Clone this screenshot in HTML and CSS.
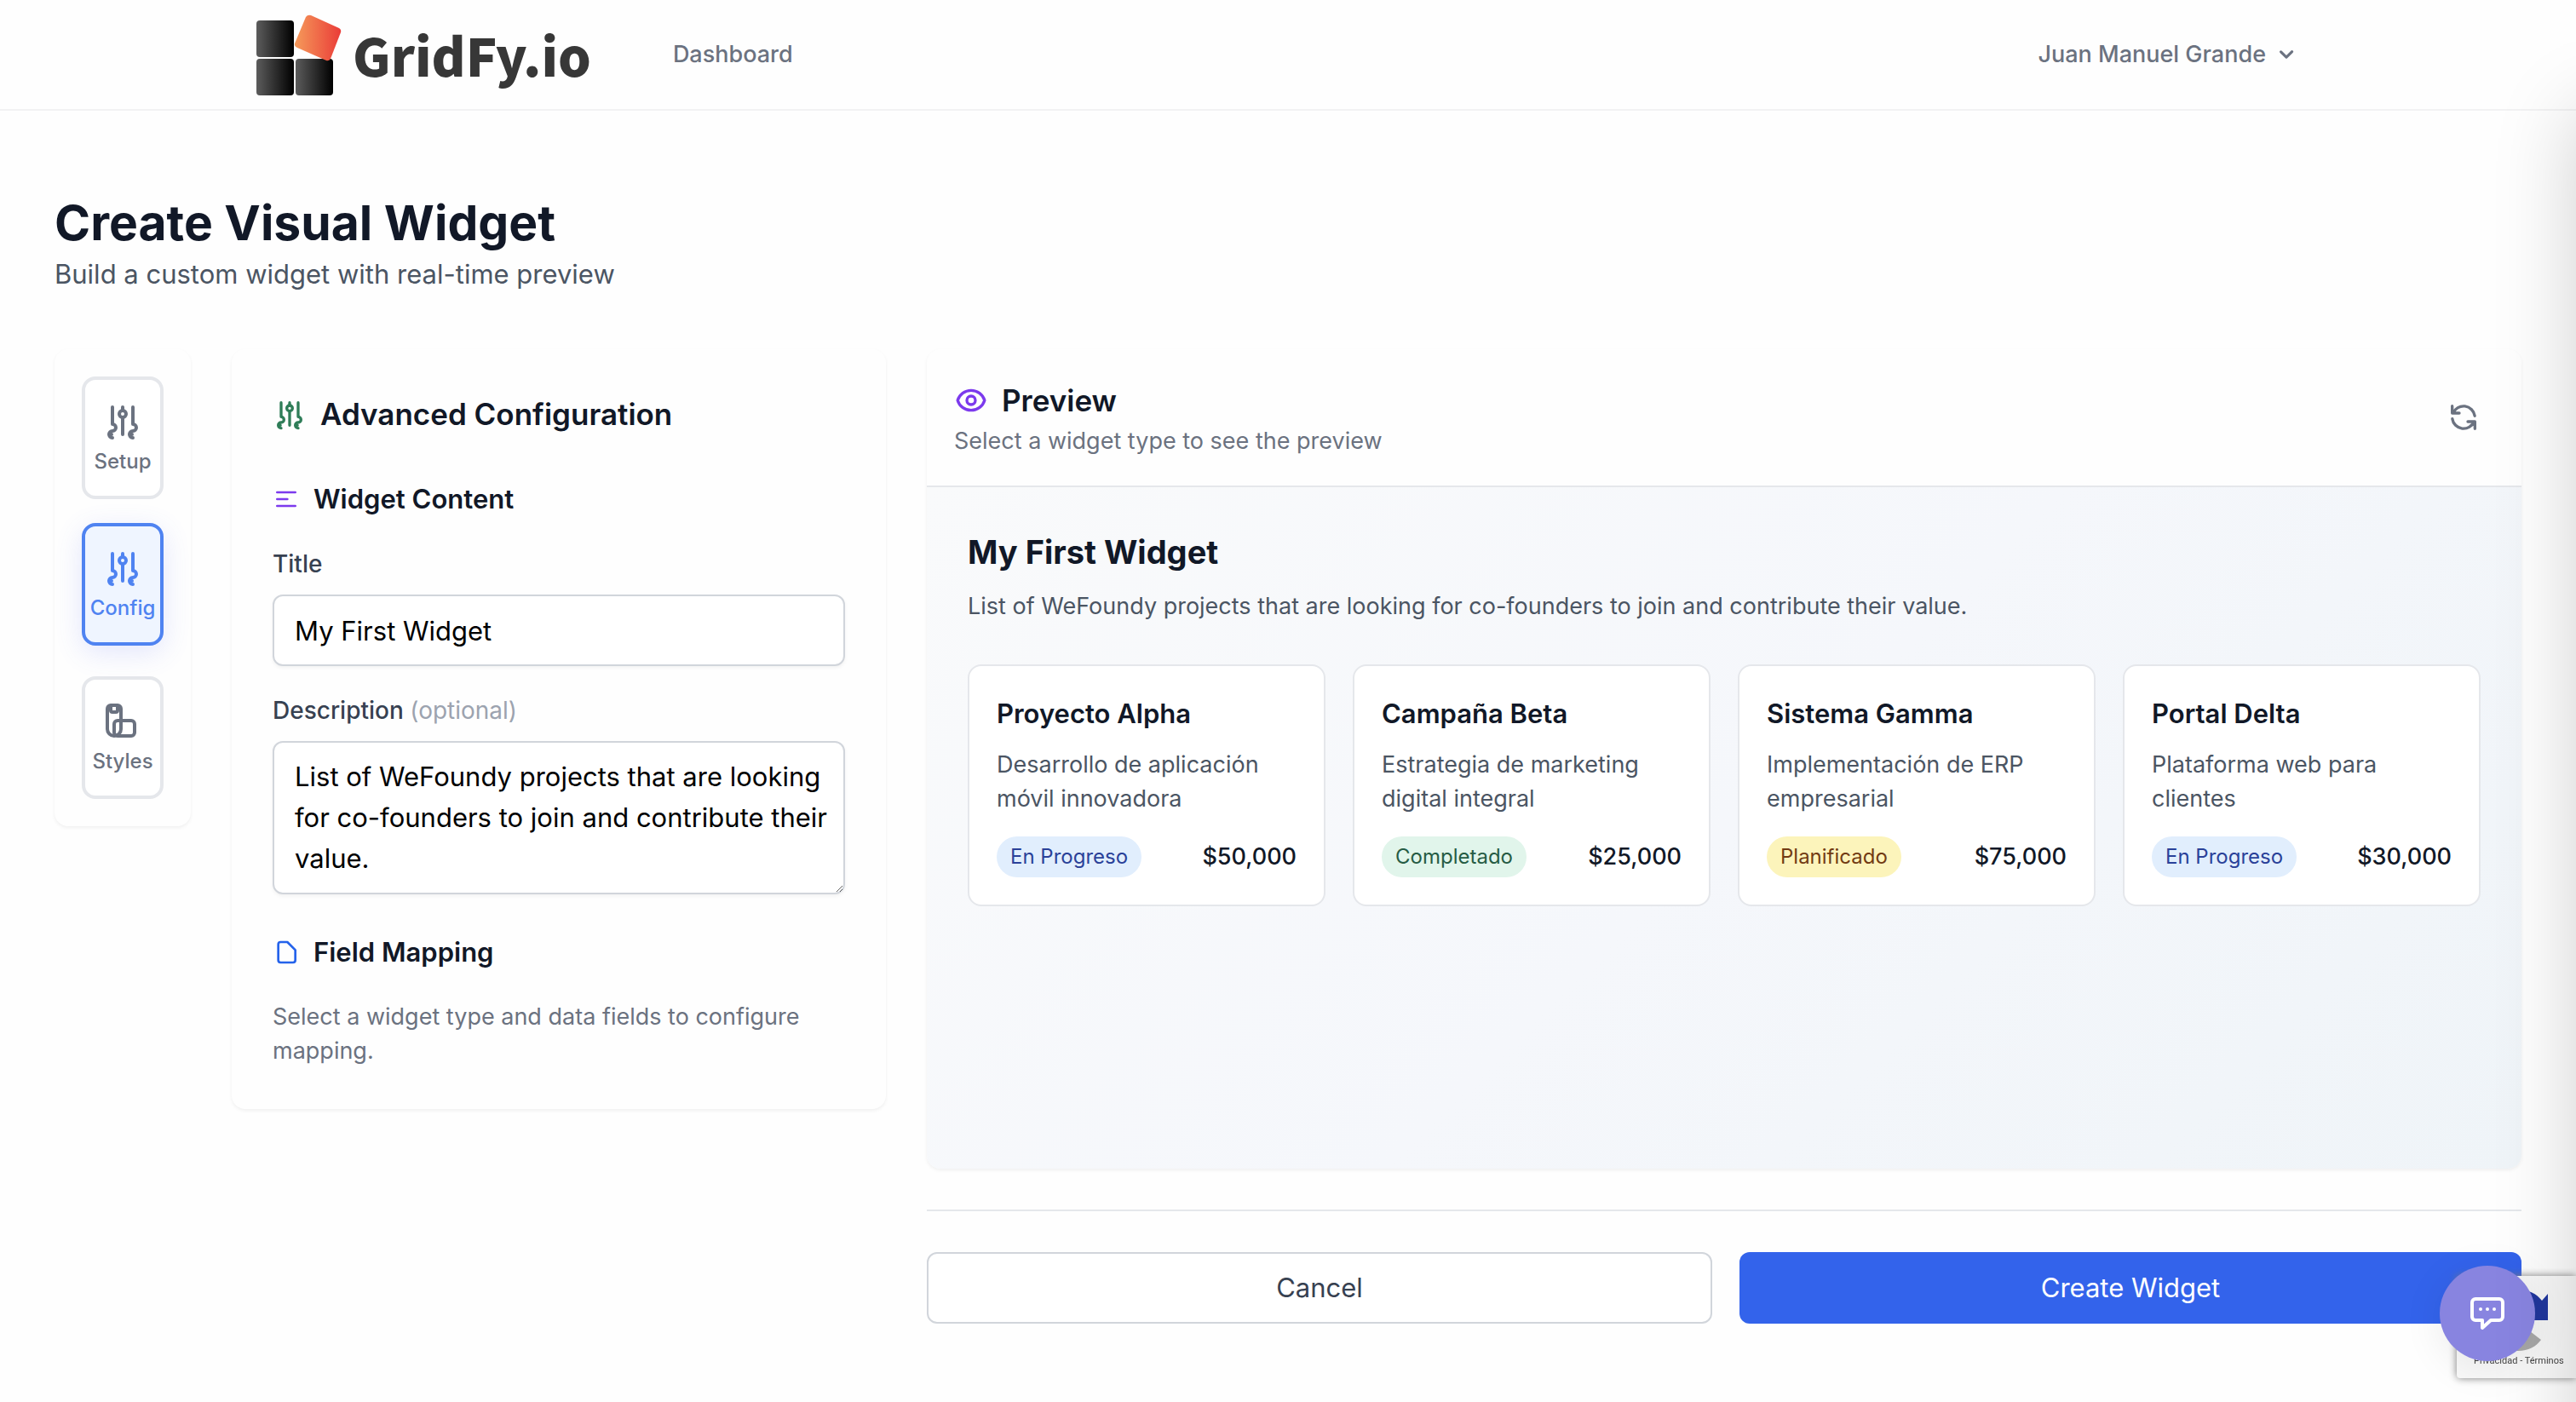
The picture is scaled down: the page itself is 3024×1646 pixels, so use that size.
FILE: index.html
```html
<!DOCTYPE html>
<html lang="en">
<head>
    <meta charset="UTF-8">
    <meta name="viewport" content="width=device-width, initial-scale=1.0">
    <title>GridFy.io - Create Visual Widget</title>
    <link rel="stylesheet" href="styles.css">
</head>
<body>
    <!-- shared icons -->
    <svg class="sprite" aria-hidden="true">
        <symbol id="icon-sliders" viewBox="0 0 24 24">
            <path d="M6 4v10a2 2 0 0 1 0 4a2 2 0 0 0 0 4M5 20h.5M12 4v2M12 10v10M18 4v10a2 2 0 0 1 0 4a2 2 0 0 0 0 4M17 20h.5"/>
            <circle cx="12" cy="8" r="2"/>
        </symbol>
    </svg>

    <header class="header">
        <div class="header-inner">
            <a href="#" class="logo" aria-label="GridFy.io">
                <svg class="logo-mark" viewBox="0 0 102 100" aria-hidden="true">
                    <defs>
                        <linearGradient id="dark"><stop offset="0" stop-color="#5c5c5c"/><stop offset="1" stop-color="#000"/></linearGradient>
                        <linearGradient id="orange"><stop offset="0" stop-color="#f59a5a"/><stop offset="1" stop-color="#ea3c38"/></linearGradient>
                    </defs>
                    <rect x="1" y="10" width="44" height="43" rx="4" fill="url(#dark)"/>
                    <rect x="1" y="55" width="44" height="43" rx="4" fill="url(#dark)"/>
                    <rect x="47" y="55" width="44" height="43" rx="4" fill="url(#dark)"/>
                    <path d="M65 4l33 15q3 2 2 5l-12 31q-2 3-5 2l-34-15q-4-2-3-5l13-31q2-3 6-2z" fill="url(#orange)"/>
                </svg>
                <span class="logo-text">GridFy.io</span>
            </a>
            <nav class="nav"><a href="#">Dashboard</a></nav>
            <button type="button" class="user-menu">Juan Manuel Grande
                <svg viewBox="0 0 20 20" fill="currentColor" aria-hidden="true"><path d="M5.3 7.3a1 1 0 0 1 1.4 0L10 10.6l3.3-3.3a1 1 0 1 1 1.4 1.4l-4 4a1 1 0 0 1-1.4 0l-4-4a1 1 0 0 1 0-1.4z"/></svg>
            </button>
        </div>
    </header>

    <main class="main">
        <h1>Create Visual Widget</h1>
        <p class="lead">Build a custom widget with real-time preview</p>

        <div class="builder">
            <nav class="panel steps">
                <button type="button" class="step"><svg class="icon"><use href="#icon-sliders"/></svg>Setup</button>
                <button type="button" class="step active"><svg class="icon"><use href="#icon-sliders"/></svg>Config</button>
                <button type="button" class="step">
                    <svg class="icon" viewBox="0 0 24 24"><path d="M5 3h4a2 2 0 0 1 2 2v12a4 4 0 0 1-8 0V5a2 2 0 0 1 2-2z"/><rect x="5" y="3" width="4" height="4" rx="1"/><rect x="7" y="12" width="12" height="9" rx="2"/></svg>Styles
                </button>
            </nav>

            <section class="panel config">
                <h2><svg class="icon green"><use href="#icon-sliders"/></svg>Advanced Configuration</h2>
                <h3><svg class="icon purple" viewBox="0 0 24 24"><path d="M4 6h16M4 12h9M4 18h16"/></svg>Widget Content</h3>
                <div class="field">
                    <label for="title">Title</label>
                    <input type="text" id="title" value="My First Widget">
                </div>
                <div class="field">
                    <label for="description">Description <span>(optional)</span></label>
                    <textarea id="description" rows="3">List of WeFoundy projects that are looking for co-founders to join and contribute their value.</textarea>
                </div>
                <h3 class="mapping"><svg class="icon blue" viewBox="0 0 24 24"><path d="M7 3h6l7 7v9a2 2 0 0 1-2 2H7a2 2 0 0 1-2-2V5a2 2 0 0 1 2-2z"/></svg>Field Mapping</h3>
                <p class="hint">Select a widget type and data fields to configure mapping.</p>
            </section>

            <div class="right">
                <section class="panel preview">
                    <div class="preview-header">
                        <div>
                            <h2><svg class="icon purple" viewBox="0 0 24 24"><circle cx="12" cy="12" r="3"/><path d="M2.5 12C3.7 7.9 7.5 5 12 5s8.3 2.9 9.5 7c-1.2 4.1-5 7-9.5 7s-8.3-2.9-9.5-7z"/></svg>Preview</h2>
                            <p class="hint">Select a widget type to see the preview</p>
                        </div>
                        <button type="button" class="refresh" aria-label="Refresh">
                            <svg class="icon" viewBox="0 0 24 24"><path d="M4 4v5h.6m15.3 2A8 8 0 0 0 4.6 9m0 0H9m11 11v-5h-.6m0 0a8 8 0 0 1-15.3-2m15.3 2H15"/></svg>
                        </button>
                    </div>
                    <div class="preview-body">
                        <h2 class="widget-title">My First Widget</h2>
                        <p class="text">List of WeFoundy projects that are looking for co-founders to join and contribute their value.</p>
                        <div class="cards">
                            <article class="card">
                                <h3>Proyecto Alpha</h3>
                                <p class="text">Desarrollo de aplicación móvil innovadora</p>
                                <div class="card-footer"><span class="badge progress">En Progreso</span><span class="price">$50,000</span></div>
                            </article>
                            <article class="card">
                                <h3>Campaña Beta</h3>
                                <p class="text">Estrategia de marketing digital integral</p>
                                <div class="card-footer"><span class="badge done">Completado</span><span class="price">$25,000</span></div>
                            </article>
                            <article class="card">
                                <h3>Sistema Gamma</h3>
                                <p class="text">Implementación de ERP empresarial</p>
                                <div class="card-footer"><span class="badge planned">Planificado</span><span class="price">$75,000</span></div>
                            </article>
                            <article class="card">
                                <h3>Portal Delta</h3>
                                <p class="text">Plataforma web para clientes</p>
                                <div class="card-footer"><span class="badge progress">En Progreso</span><span class="price">$30,000</span></div>
                            </article>
                        </div>
                    </div>
                </section>
                <div class="actions">
                    <button type="button" class="btn cancel">Cancel</button>
                    <button type="button" class="btn create">Create Widget</button>
                </div>
            </div>
        </div>
    </main>

    <div class="captcha">
        <svg viewBox="0 0 80 80" aria-hidden="true">
            <path d="M40 4c12 0 22 5 28 13l7-8v31H44l10-10c-3-5-8-8-14-8z" fill="#2138a0"/>
            <path d="M40 76C28 76 18 71 11 63l12-12c5 7 11 10 17 10 6 0 10-3 14-8l13 10c-6 8-15 13-27 13z" fill="#ababab"/>
        </svg>
        <div><a href="#">Privacidad</a> - <a href="#">Términos</a></div>
    </div>
    <button type="button" class="chat" aria-label="Chat">
        <svg viewBox="0 0 40 40" fill="none" stroke="#fff" stroke-width="4" stroke-linejoin="round" aria-hidden="true">
            <path d="M6 3h28a4 4 0 0 1 4 4v17a4 4 0 0 1-4 4H24L14 37v-9H6a4 4 0 0 1-4-4V7a4 4 0 0 1 4-4z"/>
            <g fill="#fff" stroke="none"><circle cx="12" cy="15" r="2"/><circle cx="20" cy="15" r="2"/><circle cx="28" cy="15" r="2"/></g>
        </svg>
    </button>
    <!-- closed drawer, only its shadow is visible -->
    <div class="drawer"></div>
</body>
</html>
```
FILE: styles.css
```css
*{
    box-sizing: border-box;
}
body{
    margin: 0;
    background: #fefefe;
    color: #111827;
    font-family: Inter, "Liberation Sans", sans-serif;
    font-size: 31px;
    line-height: 48px;
}
h1,
h2,
h3,
p{
    margin: 0;
}
a{
    color: inherit;
    text-decoration: none;
}
button,
input,
textarea{
    font: inherit;
    color: inherit;
}
button{
    cursor: pointer;
}
.sprite{
    display: none;
}
.icon{
    flex: none;
    width: 40px;
    height: 40px;
    fill: none;
    stroke: currentColor;
    stroke-width: 2;
    stroke-linecap: round;
    stroke-linejoin: round;
}
.green{
    color: #2f7d58;
}
.purple{
    color: #7c3aed;
}
.blue{
    color: #2563eb;
}

/* header */
.header{
    border-bottom: 2px solid #f2f2f3;
}
.header-inner{
    display: flex;
    align-items: center;
    max-width: 2560px;
    height: 128px;
    margin: 0 auto;
    padding: 0 68px;
}
.logo{
    display: flex;
    align-items: center;
    gap: 12px;
}
.logo-mark{
    width: 102px;
    height: 100px;
}
.logo-text{
    color: #373737;
    font-family: "Noto Sans CJK JP", sans-serif;
    font-size: 61px;
    font-weight: 900;
}
.nav{
    margin-left: 96px;
}
.nav,
.user-menu{
    color: #6b7280;
    font-size: 27px;
    font-weight: 500;
    line-height: 40px;
}
.user-menu{
    display: flex;
    align-items: center;
    gap: 8px;
    margin-left: auto;
    padding: 0 24px;
    border: 0;
    background: none;
}
.user-menu svg{
    width: 32px;
    height: 32px;
}

/* page */
.main{
    padding: 96px 64px 92px;
}
h1{
    font-size: 57px;
    font-weight: 700;
    line-height: 72px;
}
.lead{
    color: #4b5563;
}
.builder{
    display: grid;
    grid-template-columns: 160px 768px minmax(0, 1fr);
    align-items: start;
    gap: 48px;
    margin-top: 64px;
}
.panel{
    border-radius: 16px;
    background: #fefefe;
    box-shadow: 0 2px 4px rgba(0, 0, 0, .06);
}
h2{
    display: flex;
    align-items: center;
    gap: 16px;
    font-size: 35px;
    font-weight: 600;
    line-height: 56px;
}
h3{
    display: flex;
    align-items: center;
    gap: 16px;
    font-size: 31px;
    font-weight: 600;
    line-height: 48px;
}
h3 .icon{
    width: 32px;
    height: 32px;
}
.hint{
    color: #6b7280;
    font-size: 27px;
    line-height: 40px;
}
.text{
    color: #4b5563;
    font-size: 27px;
    line-height: 40px;
}

/* steps */
.steps{
    display: flex;
    flex-direction: column;
    gap: 32px;
    padding: 32px;
}
.step{
    display: flex;
    flex-direction: column;
    align-items: center;
    justify-content: center;
    gap: 8px;
    height: 144px;
    padding: 0;
    border: 4px solid #e5e7eb;
    border-radius: 16px;
    background: #fff;
    color: #6b7280;
    font-size: 24px;
    font-weight: 500;
    line-height: 32px;
}
.step .icon{
    width: 48px;
    height: 48px;
}
.step.active{
    transform: translateY(-4px);
    border-color: #4f83f1;
    background: #eff5ff;
    color: #4f83f1;
    box-shadow: 0 8px 32px rgba(79, 100, 241, .16);
}

/* config */
.config{
    padding: 48px;
}
.config h2{
    margin-bottom: 48px;
}
.field{
    margin-top: 32px;
}
.field label{
    display: block;
    margin-bottom: 16px;
    color: #374151;
    font-size: 28px;
    font-weight: 500;
    line-height: 40px;
}
.field label span{
    color: #9ca3af;
    font-weight: 400;
}
.field input,
.field textarea{
    display: block;
    width: 100%;
    padding: 16px 12px 16px 24px;
    border: 2px solid #d1d5db;
    border-radius: 12px;
    background: #fff;
    color: #000;
    box-shadow: 0 2px 4px rgba(0, 0, 0, .05);
}
.field input{
    height: 84px;
}
.mapping{
    margin: 44px 0 32px;
}

/* preview */
.preview-header{
    display: flex;
    align-items: center;
    justify-content: space-between;
    padding: 32px;
    border-bottom: 2px solid #e5e7eb;
}
.refresh{
    display: flex;
    padding: 16px;
    border: 0;
    background: none;
    color: #6b7280;
}
.preview-body{
    min-height: 800px;
    padding: 48px;
    border-radius: 0 0 16px 16px;
    background: linear-gradient(135deg, #f9fafb, #f5f7fb 50%, #eff4f8);
}
.widget-title{
    margin-bottom: 16px;
    font-size: 38px;
    font-weight: 700;
}
.cards{
    display: grid;
    grid-template-columns: repeat(4, 1fr);
    gap: 32px;
    margin-top: 48px;
}
.card{
    padding: 32px;
    border: 2px solid #e5e7eb;
    border-radius: 16px;
    background: #fff;
}
.card h3{
    margin-bottom: 16px;
}
.card-footer{
    display: flex;
    align-items: center;
    justify-content: space-between;
    margin-top: 24px;
}
.badge{
    padding: 8px 16px;
    border-radius: 24px;
    font-size: 24px;
    line-height: 32px;
}
.progress{
    background: #e1eefd;
    color: #2a4199;
}
.done{
    background: #e1f5eb;
    color: #265c44;
}
.planned{
    background: #fcf4bb;
    color: #723b13;
}
.price{
    font-size: 27px;
    font-weight: 500;
    line-height: 40px;
}

/* actions */
.actions{
    display: flex;
    gap: 32px;
    margin-top: 48px;
    padding-top: 48px;
    border-top: 2px solid #e5e7eb;
}
.btn{
    flex: 1;
    padding: 16px 32px;
    border: 0;
    border-radius: 12px;
}
.cancel{
    border: 2px solid #d1d5db;
    background: #fff;
    color: #374151;
}
.create{
    background: #3363eb;
    color: #fff;
}

/* floating items */
.captcha{
    position: fixed;
    right: 0;
    bottom: 28px;
    width: 140px;
    height: 120px;
    padding-left: 20px;
    border-radius: 4px 0 0 4px;
    background: #f9f9f9;
    box-shadow: 0 0 10px gray;
    color: #444;
    font-family: Roboto, sans-serif;
    font-size: 11px;
    line-height: 16px;
}
.captcha svg{
    display: block;
    width: 80px;
    height: 80px;
    margin: 12px 0 0 12px;
}
.chat{
    position: fixed;
    right: 48px;
    bottom: 48px;
    display: grid;
    place-items: center;
    width: 112px;
    height: 112px;
    padding: 0;
    border: 0;
    border-radius: 50%;
    background: #8884e0;
    box-shadow: 0 8px 48px rgba(0, 0, 0, .08);
}
.chat svg{
    width: 40px;
    height: 40px;
}
.drawer{
    position: fixed;
    top: 130px;
    bottom: -100px;
    left: 100%;
    width: 400px;
    box-shadow: 0 0 90px rgba(0, 0, 0, .18);
}
```
